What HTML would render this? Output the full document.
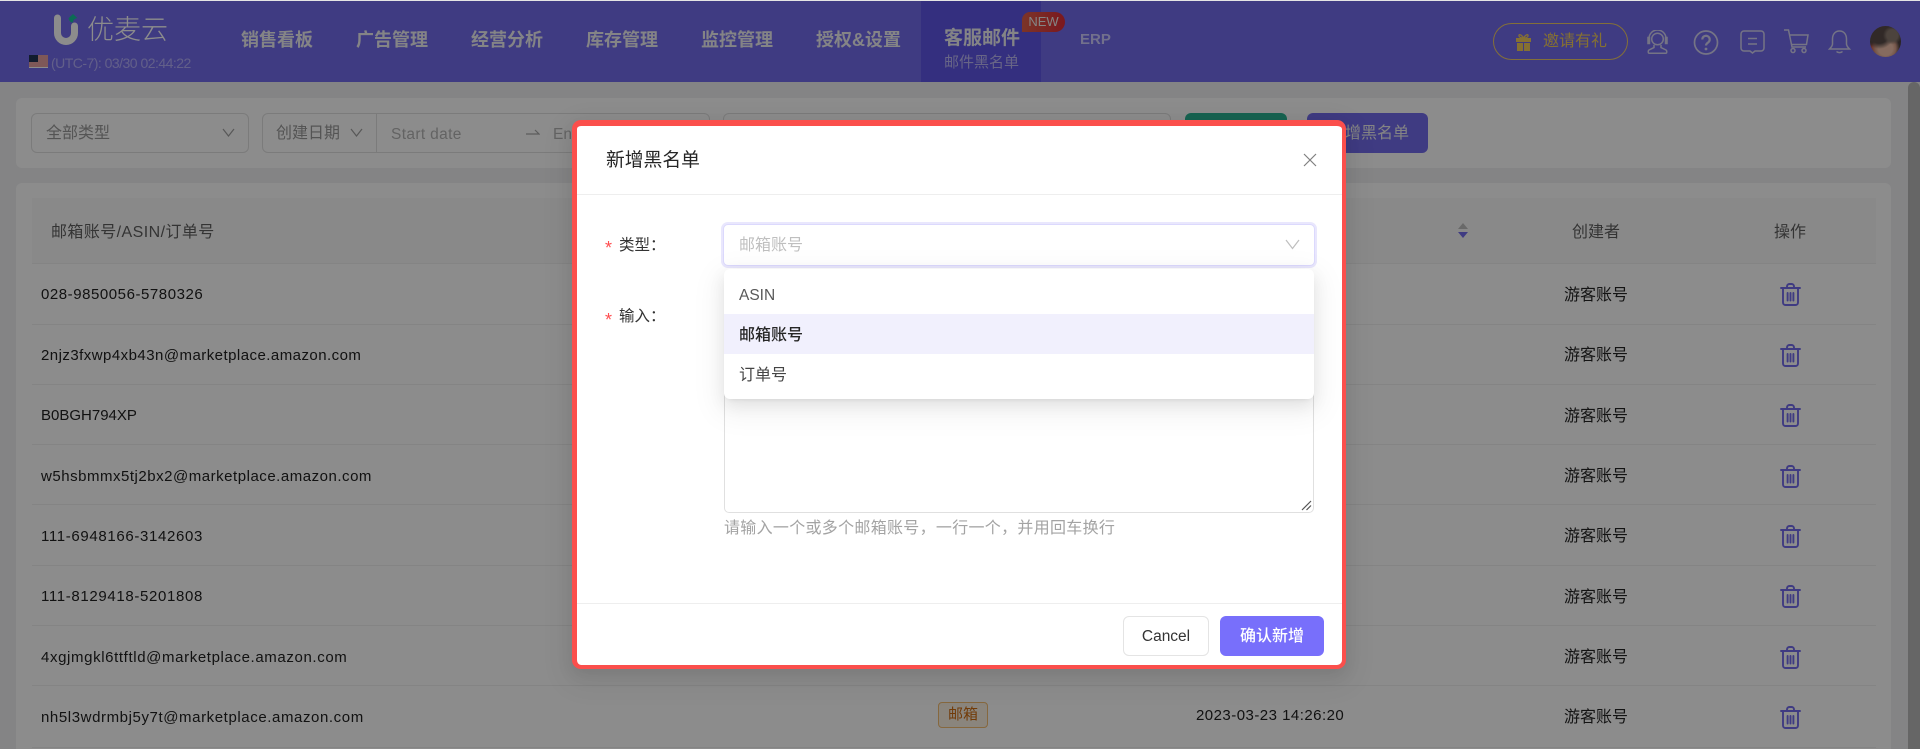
<!DOCTYPE html>
<html lang="zh"><head><meta charset="utf-8"><title>邮件黑名单</title>
<style>
html,body{margin:0;padding:0;width:1920px;height:749px;overflow:hidden;background:#f0f1f3}
body{position:relative;font-family:"Liberation Sans","Noto Sans CJK SC",sans-serif;font-size:16px;color:#262626}
div,span,svg{position:absolute}
.t{white-space:nowrap;line-height:24px;height:24px}
.nav{font-size:18px;font-weight:700;color:#f0f0f4;line-height:24px;height:24px;white-space:nowrap;top:28px}
.cell{font-size:15px;letter-spacing:.62px;left:41px;color:#222}
.line{left:32px;width:1844px;height:1px;background:#f0f0f0}
.box{box-sizing:border-box;border:1px solid #e0e0e0;border-radius:6px;background:#fff}
.g{color:#9a9a9a}
.who{left:1564px;font-size:16px;color:#262626}
.ic{fill:none;stroke:#e6e6f4;stroke-width:1.5;opacity:.85}
</style></head><body>
<svg width="0" height="0" style="position:absolute"><defs>
<symbol id="trash" viewBox="0 0 21 23"><g fill="none" stroke="#746ced" stroke-width="1.9" stroke-linecap="round" stroke-linejoin="round"><path d="M1 5h19"/><path d="M7 5V3.400A2.400 2.400 0 0 1 9.400 1h2.200A2.400 2.400 0 0 1 14 3.400V5"/><path d="M3 5v14.500A2.500 2.500 0 0 0 5.500 22h10a2.500 2.500 0 0 0 2.500-2.500V5"/><path d="M7.600 10v7.500M10.500 10v7.500M13.400 10v7.500"/></g></symbol>
</defs></svg>

<!-- header -->
<div style="left:0;top:1px;width:1920px;height:81px;background:#746ced"></div>
<div style="left:921px;top:1px;width:120px;height:81px;background:#5f56e8"></div>
<svg style="left:52px;top:14px" width="28" height="32" viewBox="0 0 28 32"><path d="M5.500 4v15a8.500 8.500 0 0 0 17 0v-7" fill="none" stroke="#fff" stroke-width="7" stroke-linecap="round"/><path d="M21 8.500a4.400 4.400 0 0 1 4.400-4.400L21 0l-4.400 4.100A4.400 4.400 0 0 0 21 8.500z" fill="#17c49a"/></svg>
<div class="t" style="left:87px;top:13px;height:34px;line-height:34px;font-size:27px;color:#fff;font-weight:300">优麦云</div>
<svg style="left:29px;top:55px" width="19" height="13" viewBox="0 0 19 13"><rect width="19" height="13" fill="#fff"/><path d="M0 1h19M0 3h19M0 5h19M0 7h19M0 9h19M0 11h19" stroke="#c44" stroke-width="1"/><rect width="9" height="7" fill="#235"/></svg>
<div class="t" style="left:51px;top:51px;font-size:14px;letter-spacing:-.52px;color:#cfcbff;opacity:.7">(UTC-7): 03/30 02:44:22</div>
<div class="nav" style="left:241px">销售看板</div>
<div class="nav" style="left:356px">广告管理</div>
<div class="nav" style="left:471px">经营分析</div>
<div class="nav" style="left:586px">库存管理</div>
<div class="nav" style="left:701px">监控管理</div>
<div class="nav" style="left:816px">授权&amp;设置</div>
<div class="nav" style="left:944px;top:27px;font-size:19px">客服邮件</div>
<div class="t" style="left:944px;top:51px;font-size:15px;color:#bdb9f5">邮件黑名单</div>
<div style="left:1022px;top:12px;width:43px;height:20px;border-radius:8px 10px 10px 0;background:linear-gradient(90deg,#e0604a,#e02c38)"></div>
<div class="t" style="left:1022px;top:10px;width:43px;text-align:center;font-size:13px;color:#f0f0f0">NEW</div>
<div class="nav" style="left:1080px;font-size:15px;font-weight:700;color:#cfccff">ERP</div>

<div style="box-sizing:border-box;left:1493px;top:23px;width:135px;height:37px;border:1px solid #efca66;border-radius:19px"></div>
<svg style="left:1515px;top:33px" width="17" height="18" viewBox="0 0 17 18"><path d="M1 5h15v4H1zM2 10h6v8H2zM9 10h6v8H9z" fill="#f3cd5c"/><path d="M8.500 5C6 1 3.500 1 4 3s3 2 4.500 2c1.500 0 4 0 4.500-2s-2-2-4.500 2z" fill="none" stroke="#f3cd5c" stroke-width="1.300"/></svg>
<div class="t" style="left:1543px;top:30px;font-size:16px;color:#f3cd5c">邀请有礼</div>

<svg class="ic" style="left:1646px;top:30px" width="23" height="24" viewBox="0 0 23 24"><circle cx="11.500" cy="9" r="5.800"/><path d="M3 10V8.500a8.500 8.500 0 0 1 17 0V10"/><path d="M2 7.500h1.500v6H2zM19.500 7.500H21v6h-1.500z"/><path d="M8 15v2.500l-5 2.500c-1 .5-1 3.200 0 3.200h17c1 0 1-2.700 0-3.200l-5-2.500V15"/></svg>
<svg style="left:1693px;top:30px;opacity:.85" width="26" height="25" viewBox="0 0 26 25"><circle cx="13" cy="12.500" r="11.500" fill="none" stroke="#e6e6f4" stroke-width="1.700"/><path d="M9.300 9.500a3.700 3.700 0 1 1 5.800 3c-1.300.9-2.100 1.500-2.100 3" fill="none" stroke="#e6e6f4" stroke-width="2.200"/><circle cx="13" cy="19" r="1.400" fill="#e6e6f4"/></svg>
<svg class="ic" style="left:1740px;top:30px" width="25" height="24" viewBox="0 0 25 24"><path d="M4 1h17a3 3 0 0 1 3 3v14a3 3 0 0 1-3 3h-6l-2.500 2-2.500-2H4a3 3 0 0 1-3-3V4a3 3 0 0 1 3-3z"/><path d="M8 8.500h9M8 14h9"/></svg>
<svg class="ic" style="left:1783px;top:29px" width="26" height="25" viewBox="0 0 26 25"><path d="M1 1h4.500L9 18h14"/><path d="M6 6h19l-1.500 9.500H8"/><circle cx="10" cy="21.500" r="2"/><circle cx="21" cy="21.500" r="2"/></svg>
<svg class="ic" style="left:1828px;top:30px" width="23" height="24" viewBox="0 0 23 24"><path d="M11.500 1c-4.500 0-7 3.500-7 8v5c0 2-1.500 3.500-3 5h20c-1.500-1.500-3-3-3-5V9c0-4.500-2.500-8-7-8z"/><path d="M8.500 21.500c1.500 1.500 4.500 1.500 6 0"/></svg>
<div style="left:1870px;top:26px;width:31px;height:31px;border-radius:50%;overflow:hidden;background:radial-gradient(circle at 72% 30%,#8a7a70 0 18%,transparent 30%),radial-gradient(circle at 30% 25%,#5a4c48 0 30%,transparent 48%),radial-gradient(circle at 50% 72%,#f4c4ae 0 26%,#d9a08a 38%,transparent 52%),radial-gradient(circle at 36% 42%,#e6b09a 0 14%,transparent 22%),radial-gradient(circle at 20% 90%,#c25a48 0 22%,transparent 34%),#4d4140"></div>

<!-- page scrollbar -->
<div style="left:1908px;top:82px;width:12px;height:667px;background:#bbb;border-radius:6px 6px 0 0"></div>

<!-- filter panel -->
<div style="left:16px;top:98px;width:1875px;height:70px;background:#fff;border-radius:6px"></div>
<div class="box" style="left:31px;top:113px;width:218px;height:40px"></div>
<div class="t g" style="left:46px;top:122px">全部类型</div>
<svg style="left:222px;top:128px" width="13" height="10" viewBox="0 0 13 10"><path d="M1 1l5.500 7L12 1" fill="none" stroke="#a0a0a0" stroke-width="1.200"/></svg>
<div class="box" style="left:262px;top:113px;width:448px;height:40px"></div>
<div style="left:376px;top:113px;width:1px;height:40px;background:#e0e0e0"></div>
<div class="t g" style="left:276px;top:122px">创建日期</div>
<svg style="left:350px;top:128px" width="13" height="10" viewBox="0 0 13 10"><path d="M1 1l5.500 7L12 1" fill="none" stroke="#a0a0a0" stroke-width="1.200"/></svg>
<div class="t" style="left:391px;top:123px;color:#b5b5b5;font-size:15.500px;letter-spacing:.35px">Start date</div>
<svg style="left:526px;top:129px" width="14" height="8" viewBox="0 0 14 8"><path d="M0 5h13L9 1" fill="none" stroke="#a8a8a8" stroke-width="1.200"/></svg>
<div class="t" style="left:553px;top:123px;color:#b5b5b5;font-size:15.500px">End date</div>
<div class="box" style="left:723px;top:113px;width:448px;height:40px"></div>
<div style="left:1185px;top:113px;width:102px;height:40px;border-radius:6px;background:#2bb494"></div>
<div style="left:1307px;top:113px;width:121px;height:40px;border-radius:6px;background:#746ced"></div>
<div class="t" style="left:1329px;top:122px;color:#f0f0f0">新增黑名单</div>

<!-- table panel -->
<div style="left:16px;top:183px;width:1875px;height:566px;background:#fff;border-radius:6px 6px 0 0"></div>
<div style="left:32px;top:198px;width:1844px;height:65px;background:#fafafa"></div>
<div class="t" style="left:51px;top:221px;color:#5f5f5f;font-size:16px;letter-spacing:.42px">邮箱账号/<b style="font-weight:500">ASIN</b>/订单号</div>
<svg style="left:1458px;top:223px" width="10" height="15" viewBox="0 0 10 15"><path d="M5 0l5 6H0z" fill="#bfbfbf"/><path d="M5 15L0 9h10z" fill="#746ced"/></svg>
<div class="t" style="left:1572px;top:221px;color:#5f5f5f">创建者</div>
<div class="t" style="left:1774px;top:221px;color:#5f5f5f">操作</div>

<div class="line" style="top:263px"></div><div class="line" style="top:324px"></div><div class="line" style="top:384px"></div><div class="line" style="top:444px"></div><div class="line" style="top:504px"></div><div class="line" style="top:565px"></div><div class="line" style="top:625px"></div><div class="line" style="top:685px"></div><div class="line" style="top:747px"></div>

<div class="t cell" style="top:283px;letter-spacing:.55px">028-9850056-5780326</div>
<div class="t cell" style="top:344px;letter-spacing:.46px">2njz3fxwp4xb43n@marketplace.amazon.com</div>
<div class="t cell" style="top:404px;letter-spacing:0">B0BGH794XP</div>
<div class="t cell" style="top:465px;letter-spacing:.52px">w5hsbmmx5tj2bx2@marketplace.amazon.com</div>
<div class="t cell" style="top:525px;letter-spacing:.65px">111-6948166-3142603</div>
<div class="t cell" style="top:585px;letter-spacing:.65px">111-8129418-5201808</div>
<div class="t cell" style="top:646px">4xgjmgkl6ttftld@marketplace.amazon.com</div>
<div class="t cell" style="top:706px;letter-spacing:.59px">nh5l3wdrmbj5y7t@marketplace.amazon.com</div>

<div class="t who" style="top:284px">游客账号</div><div class="t who" style="top:344px">游客账号</div><div class="t who" style="top:405px">游客账号</div><div class="t who" style="top:465px">游客账号</div><div class="t who" style="top:525px">游客账号</div><div class="t who" style="top:586px">游客账号</div><div class="t who" style="top:646px">游客账号</div><div class="t who" style="top:706px">游客账号</div>

<svg style="left:1780px;top:283px" width="21" height="23"><use href="#trash"/></svg>
<svg style="left:1780px;top:344px" width="21" height="23"><use href="#trash"/></svg>
<svg style="left:1780px;top:404px" width="21" height="23"><use href="#trash"/></svg>
<svg style="left:1780px;top:465px" width="21" height="23"><use href="#trash"/></svg>
<svg style="left:1780px;top:525px" width="21" height="23"><use href="#trash"/></svg>
<svg style="left:1780px;top:585px" width="21" height="23"><use href="#trash"/></svg>
<svg style="left:1780px;top:646px" width="21" height="23"><use href="#trash"/></svg>
<svg style="left:1780px;top:706px" width="21" height="23"><use href="#trash"/></svg>

<div style="box-sizing:border-box;left:938px;top:702px;width:50px;height:26px;border:1px solid #f5bd72;border-radius:4px;background:#fbf3e4"></div>
<div class="t" style="left:948px;top:703px;font-size:15px;color:#cf6c10">邮箱</div>
<div class="t" style="left:1196px;top:704px;font-size:15px;letter-spacing:.47px;color:#222">2023-03-23 14:26:20</div>

<!-- mask -->
<div style="left:0;top:0;width:1920px;height:749px;background:rgba(0,0,0,.45)"></div>
<div style="left:0;top:0;width:1920px;height:1px;background:#e4e4e4"></div>

<!-- modal -->
<div style="box-sizing:border-box;left:572px;top:120px;width:774px;height:549px;background:#fff;border:solid #fb4f4c;border-width:6px 4px 4px 5px;border-radius:9px;box-shadow:0 9px 28px 8px rgba(0,0,0,.05),0 6px 16px rgba(0,0,0,.08)"></div>
<div class="t" style="left:606px;top:147px;height:26px;line-height:26px;font-size:18.800px;color:#262626">新增黑名单</div>
<svg style="left:1303px;top:153px" width="14" height="14" viewBox="0 0 14 14"><path d="M1 1l12 12M13 1L1 13" stroke="#808080" stroke-width="1.200"/></svg>
<div style="left:577px;top:194px;width:765px;height:1px;background:#eee"></div>

<div class="t" style="left:605px;top:236px;color:#ff4d4f;font-size:18px">*</div>
<div class="t" style="left:619px;top:234px;font-size:15.500px;color:#333">类型：</div>
<div class="t" style="left:605px;top:308px;color:#ff4d4f;font-size:18px">*</div>
<div class="t" style="left:619px;top:305px;font-size:15.500px;color:#333">输入：</div>

<div style="box-sizing:border-box;left:724px;top:300px;width:590px;height:213px;border:1px solid #e0e0e0;border-radius:5px;background:#fff"></div>
<svg style="left:1301px;top:500px" width="11" height="11" viewBox="0 0 11 11"><path d="M10 1L1 10M10 5.500L5.500 10" stroke="#555" stroke-width="1.200"/></svg>
<div class="t" style="left:724px;top:517px;color:#a3a3a3;letter-spacing:.3px">请输入一个或多个邮箱账号，一行一个，并用回车换行</div>

<div style="box-sizing:border-box;left:723px;top:224px;width:592px;height:42px;background:#fff;border:1px solid #dcd9fd;border-radius:5px;box-shadow:0 0 0 2px #e9e7fd"></div>
<div class="t" style="left:739px;top:234px;color:#bfbfbf">邮箱账号</div>
<svg style="left:1285px;top:239px" width="15" height="11" viewBox="0 0 15 11"><path d="M1 1l6.500 8.500L14 1" fill="none" stroke="#bfbfbf" stroke-width="1.200"/></svg>

<div style="left:724px;top:269px;width:590px;height:130px;background:#fff;border-radius:6px;overflow:hidden;box-shadow:0 9px 28px 8px rgba(0,0,0,.05),0 6px 16px rgba(0,0,0,.08),0 3px 6px -4px rgba(0,0,0,.12)">
  <div style="left:0;top:45px;width:590px;height:40px;background:#f1f0fd"></div>
</div>
<div class="t" style="left:739px;top:284px;color:#595959;font-size:15.500px">ASIN</div>
<div class="t" style="left:739px;top:324px;color:#262626;font-weight:500">邮箱账号</div>
<div class="t" style="left:739px;top:364px;color:#444">订单号</div>

<div style="left:577px;top:603px;width:765px;height:1px;background:#eee"></div>
<div style="box-sizing:border-box;left:1123px;top:616px;width:86px;height:40px;background:#fff;border:1px solid #e4e4e4;border-radius:6px"></div>
<div class="t" style="left:1123px;top:625px;width:86px;text-align:center;color:#333;font-size:15.500px">Cancel</div>
<div style="left:1220px;top:616px;width:104px;height:40px;background:#786ffb;border-radius:6px"></div>
<div class="t" style="left:1220px;top:625px;width:104px;text-align:center;color:#fff;font-weight:500">确认新增</div>
</body></html>
